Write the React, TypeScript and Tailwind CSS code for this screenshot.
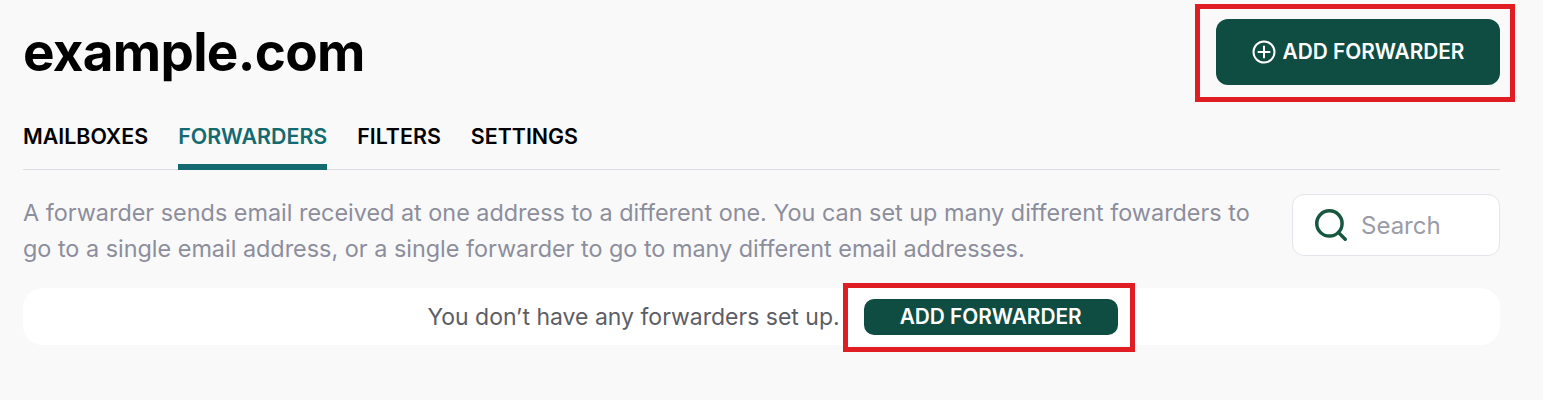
import React from "react";
import { Search } from "lucide-react";

export default function App() {
  return (
    <div className="h-[400px] overflow-hidden bg-[#f9f9f9] pl-[23px] pr-[43px] font-['Inter',sans-serif]">
      <header className="flex items-start justify-between pt-[19px]">
        <h1 className="mt-[5px] text-[53px] font-bold leading-[56px] tracking-[-0.7px] text-black">example.com</h1>
        <div className="relative">
          <button className="flex h-[66px] w-[284px] items-center justify-center gap-[7px] rounded-[12px] bg-[#0f4c42] text-[20.8px] font-semibold text-white">
            <svg width="24" height="24" viewBox="0 0 24 24" fill="none" stroke="currentColor" strokeWidth="2" strokeLinecap="round">
              <circle cx="12" cy="12" r="10.5" />
              <path d="M12 6.5v11M6.5 12h11" />
            </svg>
            ADD FORWARDER
          </button>
          <div className="pointer-events-none absolute left-[-21px] top-[-15px] h-[98px] w-[320px] border-[5px] border-[#e11d24]" />
        </div>
      </header>

      <nav className="mt-[33px] flex h-[52px] gap-[30px] border-b border-[#dcdde3] text-[21.4px] font-semibold leading-[36px]">
        <a className="text-black">MAILBOXES</a>
        <a className="h-[52px] border-b-[6px] border-[#136a70] text-[#136a70]">FORWARDERS</a>
        <a className="text-black">FILTERS</a>
        <a className="text-black">SETTINGS</a>
      </nav>

      <section className="mt-[24px] flex items-start justify-between">
        <p className="w-[1240px] pt-[1px] text-[23.4px] leading-[36px] text-[#8d8e9c]">
          A forwarder sends email received at one address to a different one. You can set up many different fowarders to go to a single email address, or a single forwarder to go to many different email addresses.
        </p>
        <div className="flex h-[62px] w-[208px] items-center gap-[11px] rounded-[12px] border border-[#e5e6eb] bg-white pl-[19px] text-[24px] text-[#9a9ba8]">
          <Search size={38} strokeWidth={2.2} className="text-[#17573f]" />
          <span className="mt-[1px]">Search</span>
        </div>
      </section>

      <div className="mt-[21px] flex h-[57px] items-center justify-center gap-[24px] rounded-[20px] bg-white pl-[22px] text-[23px] text-[#5d5d66]">
        <span className="mt-[2px]">You don’t have any forwarders set up.</span>
        <div className="relative">
          <button className="flex h-[36px] w-[254px] items-center justify-center rounded-[10px] bg-[#0f4c42] text-[20.8px] font-semibold text-white">
            ADD FORWARDER
          </button>
          <div className="pointer-events-none absolute left-[-21px] top-[-16px] h-[69px] w-[292px] border-[5px] border-[#e11d24]" />
        </div>
      </div>
    </div>
  );
}
